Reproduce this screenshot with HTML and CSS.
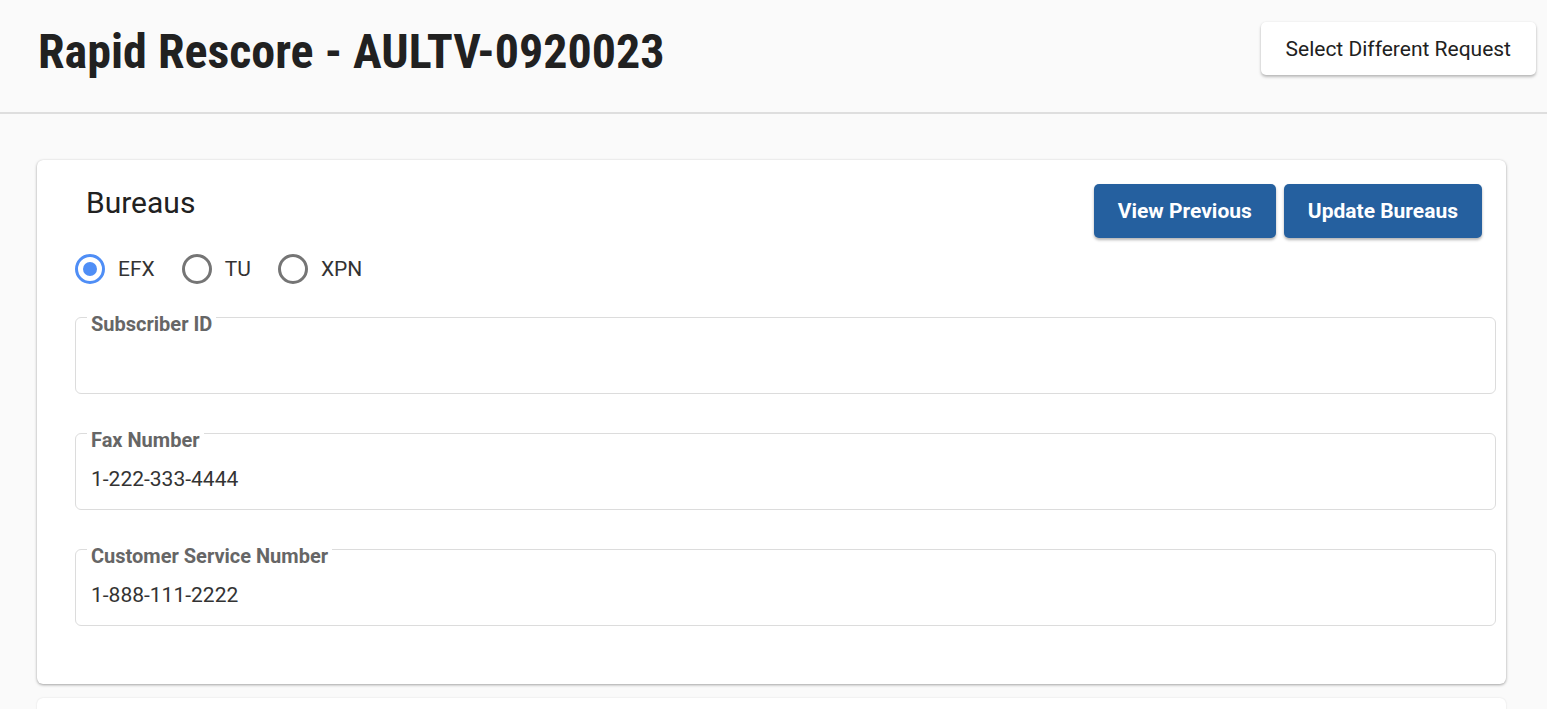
FILE: index.html
```html
<!DOCTYPE html>
<html lang="en">
<head>
<meta charset="utf-8">
<title>Rapid Rescore</title>
<link rel="stylesheet" href="styles.css">
</head>
<body>
<header class="page-header">
  <h1 class="page-title">Rapid Rescore - AULTV-0920023</h1>
  <button class="btn-light">Select Different Request</button>
</header>
<main class="content">
  <section class="card">
    <div class="card-top">
      <div class="card-left">
        <h2 class="card-title">Bureaus</h2>
        <div class="radios">
          <label class="radio"><span class="radio-circle checked"></span><span class="radio-label">EFX</span></label>
          <label class="radio"><span class="radio-circle"></span><span class="radio-label">TU</span></label>
          <label class="radio"><span class="radio-circle"></span><span class="radio-label">XPN</span></label>
        </div>
      </div>
      <div class="actions">
        <button class="btn-primary">View Previous</button>
        <button class="btn-primary">Update Bureaus</button>
      </div>
    </div>
    <div class="fields">
      <div class="field"><span class="field-label">Subscriber ID</span><span class="field-value"></span></div>
      <div class="field"><span class="field-label">Fax Number</span><span class="field-value">1-222-333-4444</span></div>
      <div class="field"><span class="field-label">Customer Service Number</span><span class="field-value">1-888-111-2222</span></div>
    </div>
  </section>
  <section class="card card-next"></section>
</main>
</body>
</html>
```
FILE: styles.css
```css
html, body {
  margin: 0;
  padding: 0;
}
body {
  background: #fafafa;
  font-family: Roboto, "Liberation Sans", sans-serif;
  color: #212121;
  overflow: hidden;
  height: 709px;
}
.page-header {
  height: 114px;
  box-sizing: border-box;
  border-bottom: 2px solid #dedede;
  display: flex;
  align-items: center;
  justify-content: space-between;
  padding: 0 11px 15px 38px;
}
.page-title {
  margin: 5px 0 0 0;
  font-size: 48px;
  font-weight: 700;
  font-stretch: condensed;
  color: #212121;
}
.btn-light {
  background: #fff;
  border: none;
  border-radius: 5px;
  height: 53px;
  padding: 0 25px;
  font-family: Roboto, sans-serif;
  font-size: 21px;
  color: #212121;
  box-shadow: 0 2px 3px rgba(0,0,0,0.25), 0 0 2px rgba(0,0,0,0.08);
}
.content {
  padding: 46px 41px 0 37px;
}
.card {
  background: #fff;
  border-radius: 6px;
  box-shadow: 0 1px 3px rgba(0,0,0,0.35), 0 0 1px rgba(0,0,0,0.1);
  padding: 24px 10px 58px 38px;
}
.card-next {
  margin-top: 14px;
  height: 40px;
  padding: 0;
  box-shadow: 0 0 2px rgba(0,0,0,0.12);
}
.card-top {
  display: flex;
  justify-content: space-between;
  align-items: flex-start;
  margin-right: 14px;
}
.card-title {
  margin: 2px 0 0 11px;
  font-size: 30px;
  font-weight: 400;
  line-height: 34px;
  color: #212121;
}
.radios {
  display: flex;
  gap: 27px;
  margin-top: 34px;
}
.radio {
  display: flex;
  align-items: center;
  gap: 13px;
}
.radio-circle {
  width: 30px;
  height: 30px;
  box-sizing: border-box;
  border: 3px solid #757575;
  border-radius: 50%;
  display: flex;
  align-items: center;
  justify-content: center;
}
.radio-circle.checked {
  border-color: #4f8ef6;
}
.radio-circle.checked::after {
  content: "";
  width: 14px;
  height: 14px;
  border-radius: 50%;
  background: #4f8ef6;
}
.radio-label {
  font-size: 21px;
  color: #333;
}
.actions {
  display: flex;
  gap: 8px;
}
.btn-primary {
  background: #25609f;
  color: #fff;
  border: none;
  border-radius: 5px;
  height: 54px;
  padding: 0 24px;
  font-family: Roboto, sans-serif;
  font-size: 21px;
  font-weight: 700;
  box-shadow: 0 2px 3px rgba(0,0,0,0.3);
}
.fields {
  display: flex;
  flex-direction: column;
  gap: 39px;
  margin-top: 33px;
}
.field {
  position: relative;
  height: 77px;
  box-sizing: border-box;
  border: 1px solid #dcdcdc;
  border-radius: 6px;
  padding: 14px 15px 0 15px;
  display: flex;
  align-items: center;
}
.field-label {
  position: absolute;
  top: -5px;
  left: 11px;
  padding: 0 4px;
  background: #fff;
  font-size: 20px;
  font-weight: 700;
  line-height: 23px;
  color: #666;
}
.field-value {
  font-size: 21px;
  line-height: 24px;
  color: #333;
}
```
